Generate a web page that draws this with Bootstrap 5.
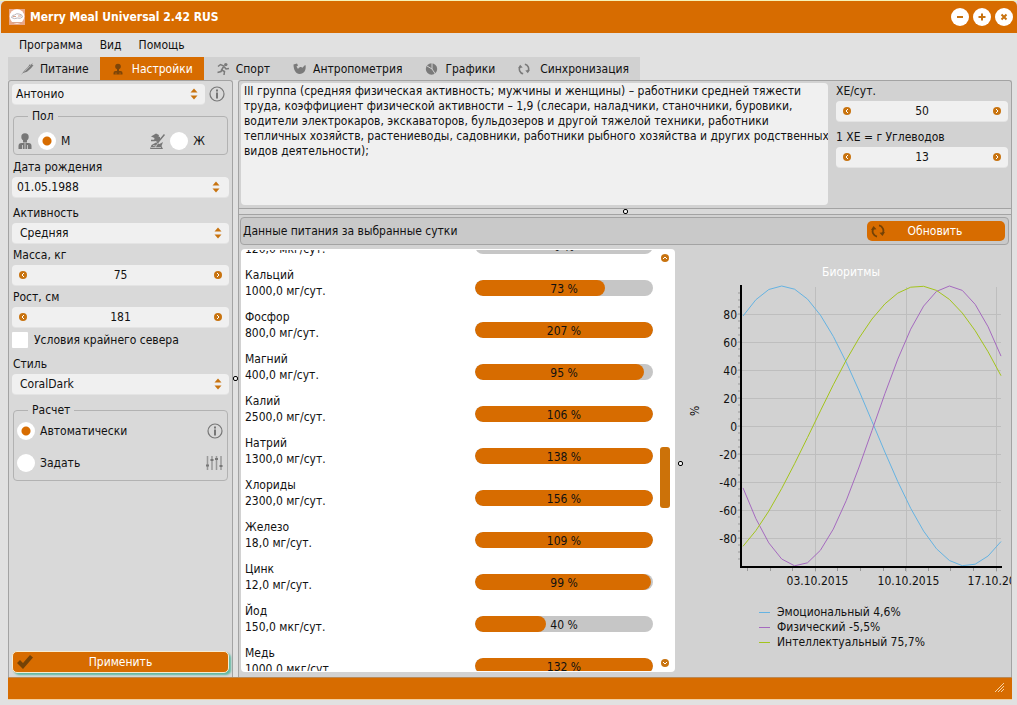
<!DOCTYPE html>
<html lang="ru">
<head>
<meta charset="utf-8">
<meta name="viewport" content="width=device-width, initial-scale=1">
<title>Merry Meal Universal 2.42 RUS</title>
<link href="https://cdn.jsdelivr.net/npm/bootstrap@5.3.0/dist/css/bootstrap.min.css" rel="stylesheet">
<style>
:root { --orange:#d76c00; --knob:#c8730f; --line:#a3a3a3; --field:#f0f0f0; --panel:#d2d2d2; }
body { font:12px/16px "DejaVu Sans Condensed","DejaVu Sans",sans-serif; color:#111; background:#e1e1e1; }
button, input, select, textarea { font:inherit; color:inherit; }
svg { display:block; flex:none; }
.app { overflow:hidden; padding:1px 0 6px 1px; background:#e1e1e1; box-shadow:inset 0 1px #f8f3b5; }
.titlebar { flex:none; height:32px; background:var(--orange); color:#fff; border-radius:5px 5px 0 0; padding:0 4px 0 8px; font-weight:bold; }
.app-name { padding-left:5px; }
.win-btn { width:18px; height:18px; border:0; padding:0; border-radius:50%; background:#fff; color:var(--knob); }
.menu { flex:none; height:24px; padding:0 18px; gap:17px; }
.menu a { color:#111; text-decoration:none; }
.workspace { margin:0 5px 0 7px; }
.fit { min-height:0; min-width:0; }
.tabs { flex:none; background:#d1d1d1; align-self:flex-start; flex-wrap:nowrap; }
.tabs .nav-link { display:flex; align-items:center; gap:6px; height:23px; padding:1px 11px 0 12px; border-radius:0; color:#111; white-space:nowrap; }
.tabs .nav-link svg { color:#7a7a7a; }
.tabs .nav-link.active { background:var(--orange); color:#fff; }
.tabs .nav-link.active svg { color:#7d4508; }
.side { width:225px; flex:none; background:#d9d9d9; border:1px solid var(--line); border-bottom:0; border-radius:3px 3px 0 0; padding:3px 3px 4px; }
.side > .cap { padding-left:1px; margin-bottom:2px; }
.box { height:20px; min-height:0; border:0; border-radius:4px; background-color:var(--field); font-size:12px; line-height:16px; color:#111; padding:2px 5px; box-shadow:0 1px #e4e4e4; }
select.box, .datebox { background-repeat:no-repeat; background-size:8px 12px;
  background-image:url("data:image/svg+xml,%3Csvg xmlns='http://www.w3.org/2000/svg' viewBox='0 0 8 12'%3E%3Cpath fill='%23c8730f' d='M.5 4.500 4 .5l3.500 4zM.5 7.500h7L4 11.500z'/%3E%3C/svg%3E"); }
select.box { padding:2px 20px 2px 8px; background-position:right 7px center; }
select.person { padding-left:4px; }
.datebox { background-position:right 9px center; }
.spin { display:flex; align-items:center; height:20px; border-radius:4px; background:var(--field); box-shadow:0 1px #e4e4e4; padding:0 7px; }
.spin input { flex:1; min-width:0; border:0; background:none; text-align:center; padding:0; height:20px; }
.knob { border:0; padding:0; background:none; color:var(--knob); flex:none; }
.group { border:1px solid #b2b2b2; border-radius:4px; margin:0 1px; }
.group legend { font-size:12px; line-height:16px; margin:-9px 0 0 14px; padding:0 4px; background:#d9d9d9; display:table; }
.opt { display:flex; align-items:center; gap:1px; padding:0 4px 0 3px; }
.opt + .opt { margin-top:14px; }
.sex { margin:8px 0 4px; }
.sex .last { padding-right:18px; }
.dot { appearance:none; width:18px; height:18px; margin:0; flex:none; border-radius:50%; background:#fff; }
.dot:checked { background:radial-gradient(circle,var(--orange) 4px,#fff 5px); }
.north { margin:5px 0 8px; }
.tick { appearance:none; width:16px; height:16px; margin:0 6px 0 0; background:#fff; flex:none; border-radius:1px; }
.g-ico { color:#777; }
.act { display:flex; align-items:center; height:20px; padding:0 20px 0 4px; background:var(--orange); color:#fff; border:0; border-radius:5px; font-size:12px; line-height:16px; }
.act:hover { background:#e47a10; color:#fff; }
.act span { flex:1; }
.apply { border:1px solid #f7ecd0; height:22px; box-shadow:2px 2px 2px #5fb9a3; }
.split { display:flex; align-items:center; justify-content:center; flex:none; }
.split i { width:5px; height:5px; border:1px solid #000; border-radius:2px; background:#f4f4f4; }
.split-v { width:5px; }
.split-h { height:7px; background:#d9d9d9; border:solid var(--line); border-width:1px 0; }
.main { background:var(--panel); border:1px solid var(--line); border-bottom:0; border-radius:3px 3px 0 0; }
.top-pane { flex:none; height:127px; padding:2px 3px 3px 2px; gap:8px; }
.note { width:100%; border:0; border-radius:4px; background:var(--field); resize:none; padding:1px 0 1px 3px; line-height:15px; white-space:pre; overflow:hidden; display:block; }
.xe { width:172px; flex:none; }
.xe .cap { margin-bottom:2px; }
.caption-bar { height:28px; margin:2px 2px 4px 1px; background:#c9c9c9; border:1px solid var(--line); border-radius:4px; padding:0 3px 0 2px; }
.refresh { width:138px; }
.feed { width:434px; flex:none; background:#fff; margin:0 0 5px 2px; border-radius:4px; padding:1px 5px 1px 4px; }
.feed ul { overflow:hidden; min-height:0; margin:0; padding:0; list-style:none; }
.feed li { display:flex; align-items:center; margin-bottom:10px; }
.feed li div:first-child { width:230px; flex:none; }
.meter { width:178px; height:16px; border-radius:8px; background:#c6c6c6; position:relative; font-size:12px; margin-top:10px; }
.meter .progress-bar { background:var(--orange); border-radius:8px; }
.meter span { position:absolute; inset:0; text-align:center; line-height:18px; color:#111; }
.rail { width:10px; padding:4px 0; }
.rail .thumb { height:61px; width:10px; border-radius:3px; background:#cc7209; }
.rail .before { flex:183; } .rail .after { flex:150; }
.chart-handle { margin-left:3px; }
.chart-title { color:#fff; padding:15px 0 0 8px; text-align:center; }
.chart-pane { overflow:hidden; }
.chart-pane text { font-size:12px; fill:#111; }
.legend-list { margin:17px 0 0 76px; padding:0; list-style:none; line-height:15px; }
.legend-list li { display:flex; gap:7px; align-items:center; }
.legend-list b { width:11px; height:1px; }
.status { flex:none; height:22px; background:var(--orange); box-shadow:inset 0 1px #b98a58, 0 1px #f3cf9f; padding:5px 7px; color:#f6d3a5; }
</style>
</head>
<body>
<svg width="0" height="0" class="position-absolute" aria-hidden="true">
  <symbol id="left" viewBox="0 0 8 8"><circle cx="4" cy="4" r="4" fill="currentColor"/><path d="M5 2 3 4l2 2" fill="none" stroke="#fff"/></symbol>
  <symbol id="right" viewBox="0 0 8 8"><circle cx="4" cy="4" r="4" fill="currentColor"/><path d="M3 2l2 2-2 2" fill="none" stroke="#fff"/></symbol>
  <symbol id="up" viewBox="0 0 8 8"><circle cx="4" cy="4" r="4" fill="currentColor"/><path d="M2 5l2-2 2 2" fill="none" stroke="#fff"/></symbol>
  <symbol id="down" viewBox="0 0 8 8"><circle cx="4" cy="4" r="4" fill="currentColor"/><path d="M2 3l2 2 2-2" fill="none" stroke="#fff"/></symbol>
  <symbol id="info" viewBox="0 0 16 16"><circle cx="8" cy="8" r="7" fill="none" stroke="#777" stroke-width="1.2"/><path d="M7 3.600h2v2H7zM7 6.600h2v6H7z" fill="#777"/></symbol>
  <symbol id="sync" viewBox="0 0 14 14"><path d="M6 12.600A5.400 5.400 0 0 1 2.400 4.500M8 1.400A5.400 5.400 0 0 1 11.600 9.500" fill="none" stroke="currentColor" stroke-width="1.800"/><path d="M0 6 2.500 2l3 3.200zM14 8 11.500 12l-3-3.200z" fill="currentColor"/></symbol>
</svg>
<div class="app vh-100 d-flex flex-column">
  <header class="titlebar d-flex align-items-center">
    <svg width="16" height="16" viewBox="0 0 16 16"><path fill="#e9a787" d="M0 0h16v16H0z"/><circle cx="8" cy="7.500" r="7.300" fill="#fff"/><path d="M2.500 8.500q1-3 3-2.500 2-2 4.500-1 3 0 3.500 3-2 2-5 1-3 1.500-6-.5z" fill="none" stroke="#b9b4b8"/><path d="M4 7.500h3M9 7h3M3 13.500h10" stroke="#d9a48c"/></svg>
    <span class="app-name flex-grow-1">Merry Meal Universal 2.42 RUS</span>
    <div class="d-flex gap-1">
      <button class="win-btn" aria-label="Свернуть"><svg width="18" height="18"><path d="M6 9h6" stroke="currentColor" stroke-width="2"/></svg></button>
      <button class="win-btn" aria-label="Развернуть"><svg width="18" height="18"><path d="M5.500 9h7M9 5.500v7" stroke="currentColor" stroke-width="2"/></svg></button>
      <button class="win-btn" aria-label="Закрыть"><svg width="18" height="18"><path d="M6.500 6.500l5 5m0-5l-5 5" stroke="currentColor" stroke-width="2"/></svg></button>
    </div>
  </header>
  <nav class="menu d-flex align-items-center"><a href="#">Программа</a><a href="#">Вид</a><a href="#">Помощь</a></nav>

  <div class="workspace fit d-flex flex-column flex-grow-1">
    <nav class="nav tabs">
      <a class="nav-link" href="#"><svg width="14" height="14" viewBox="0 0 14 14"><path d="M1 13l3-4 4-4 2-3 .6 1.200L12.500 1l-.3 2 1.300.2-2.500 3-4 3.500L3 11z" fill="currentColor"/><path d="M10.500 3.500l-6 6" stroke="#c4c4c4" stroke-width=".7"/></svg>Питание</a>
      <a class="nav-link active" aria-current="page" href="#"><svg width="14" height="14" viewBox="0 0 14 14"><circle cx="6" cy="4.500" r="2.800" fill="currentColor"/><path d="M5 7h2v2H5zM1.500 12.500V11q0-2 2-2h5q2 0 2 2v1.500z" fill="currentColor"/><path d="M4 10.500v2M8 10.500v2" stroke="#d76c00" stroke-width=".7"/></svg>Настройки</a>
      <a class="nav-link" href="#"><svg width="14" height="14" viewBox="0 0 14 14"><circle cx="9.800" cy="2.600" r="1.700" fill="currentColor"/><path d="M2 4.500 4.500 2.500 8 4l-2.500 4 3 1.500L8 13M6.500 7 5 9.500 1.500 10.500M8 4.500l2 2.500 3-.5" fill="none" stroke="currentColor" stroke-width="1.500"/></svg>Спорт</a>
      <a class="nav-link" href="#"><svg width="14" height="14" viewBox="0 0 14 14"><path d="M.5 2.500 4 1.500 5 3.500 3.500 4.500 5 7C6.500 5 8 4.500 9.500 5.800 10.500 5 11 3.500 12.500 3c1 5-1.500 9-6 9C3 12 .5 8 .5 2.500z" fill="currentColor"/></svg>Антропометрия</a>
      <a class="nav-link" href="#"><svg width="14" height="14" viewBox="0 0 14 14"><circle cx="6.500" cy="7" r="5.700" fill="currentColor"/><path d="M7 0v7l4 6M7 7 2 4" fill="none" stroke="#d1d1d1"/></svg>Графики</a>
      <a class="nav-link" href="#"><svg width="12" height="12"><use href="#sync"/></svg><span class="ps-1">Синхронизация</span></a>
    </nav>

    <div class="fit d-flex flex-grow-1">
      <aside class="side d-flex flex-column">
        <div class="d-flex align-items-center gap-1 mb-1">
          <select class="form-select box person" aria-label="Пользователь"><option>Антонио</option></select>
          <svg class="me-1" width="16" height="16"><use href="#info"/></svg>
        </div>
        <fieldset class="group">
          <legend class="float-none w-auto">Пол</legend>
          <div class="opt sex">
            <svg class="g-ico me-1" width="16" height="16" viewBox="0 0 16 16"><circle cx="8" cy="4" r="3.700" fill="currentColor"/><path d="M6 7h4v2.500H6zM1.500 16v-3Q1.500 10 4.500 10h7q3 0 3 3v3z" fill="currentColor"/><path d="M8 10v6M5.500 12v4M10.500 12v4" stroke="#d9d9d9" stroke-width=".8"/></svg>
            <input class="dot" type="radio" name="sex" id="m" checked><label class="ps-1 flex-grow-1" for="m">М</label>
            <svg class="g-ico me-1" width="16" height="16" viewBox="0 0 16 16"><path d="M2 3.500 7 .5l3 1.500-.5 1.500 1.500.5v3L8.500 9 5 7.500 5.500 5z" fill="currentColor"/><path d="M1 16l1.500-4L7 9.500l3.500 1.500L14 9l-1.500 4 1.500 3z" fill="currentColor"/><path d="M15.500 1.500 5 14M2 7.500h4" stroke="#777" stroke-width="1.500"/><path d="M4 12.500l3 .5M9 10l-3 5M2 14.500h10" stroke="#d9d9d9" stroke-width=".7"/></svg>
            <input class="dot" type="radio" name="sex" id="f"><label class="ps-1 last" for="f">Ж</label>
          </div>
        </fieldset>
        <label class="cap mt-1" for="birth">Дата рождения</label>
        <input class="form-control box datebox mb-2" id="birth" value="01.05.1988">
        <label class="cap" for="activity">Активность</label>
        <select class="form-select box mb-1" id="activity"><option>Средняя</option></select>
        <label class="cap" for="mass">Масса, кг</label>
        <div class="spin mb-1"><button class="knob" aria-label="Меньше"><svg width="8" height="8"><use href="#left"/></svg></button><input id="mass" value="75"><button class="knob" aria-label="Больше"><svg width="8" height="8"><use href="#right"/></svg></button></div>
        <label class="cap" for="height">Рост, см</label>
        <div class="spin"><button class="knob" aria-label="Меньше"><svg width="8" height="8"><use href="#left"/></svg></button><input id="height" value="181"><button class="knob" aria-label="Больше"><svg width="8" height="8"><use href="#right"/></svg></button></div>
        <div class="north d-flex align-items-center"><input class="tick" type="checkbox" id="north"><label for="north">Условия крайнего севера</label></div>
        <label class="cap" for="style">Стиль</label>
        <select class="form-select box mb-2" id="style"><option>CoralDark</option></select>
        <fieldset class="group pb-2">
          <legend class="float-none w-auto">Расчет</legend>
          <div class="opt mt-1"><input class="dot" type="radio" name="calc" id="auto" checked><label class="ps-1 flex-grow-1" for="auto">Автоматически</label><svg width="16" height="16"><use href="#info"/></svg></div>
          <div class="opt"><input class="dot" type="radio" name="calc" id="manual"><label class="ps-1 flex-grow-1" for="manual">Задать</label><svg width="18" height="16" viewBox="0 0 18 16"><path d="M2.500 1v14M7 1v14M11.500 1v14M16 1v14" stroke="#999" stroke-width="1.500"/><path d="M1 10.500h3M5.500 5h3M10 4h3M14.500 11h3" stroke="#777" stroke-width="2"/></svg></div>
        </fieldset>
        <button class="btn act apply mt-auto"><svg width="16" height="16" viewBox="0 0 16 16"><path d="M0 9l3-3 3 3 7-8 3 2.500L6 15z" fill="#744206"/></svg><span>Применить</span></button>
      </aside>

      <div class="split split-v"><i></i></div>

      <main class="main fit d-flex flex-column flex-grow-1">
        <section class="top-pane d-flex">
          <textarea class="note" wrap="off" aria-label="Описание группы активности">III группа (средняя физическая активность; мужчины и женщины) – работники средней тяжести
труда, коэффициент физической активности – 1,9 (слесари, наладчики, станочники, буровики,
водители электрокаров, экскаваторов, бульдозеров и другой тяжелой техники, работники
тепличных хозяйств, растениеводы, садовники, работники рыбного хозяйства и других родственных
видов деятельности);</textarea>
          <div class="xe d-flex flex-column">
            <label class="cap" for="xe">ХЕ/сут.</label>
            <div class="spin mb-2"><button class="knob" aria-label="Меньше"><svg width="8" height="8"><use href="#left"/></svg></button><input id="xe" value="50"><button class="knob" aria-label="Больше"><svg width="8" height="8"><use href="#right"/></svg></button></div>
            <label class="cap" for="carb">1 ХЕ = г Углеводов</label>
            <div class="spin"><button class="knob" aria-label="Меньше"><svg width="8" height="8"><use href="#left"/></svg></button><input id="carb" value="13"><button class="knob" aria-label="Больше"><svg width="8" height="8"><use href="#right"/></svg></button></div>
          </div>
        </section>
        <div class="split split-h"><i></i></div>
        <div class="caption-bar d-flex align-items-center justify-content-between flex-shrink-0">
          <span>Данные питания за выбранные сутки</span>
          <button class="btn act refresh"><svg width="14" height="14" style="color:#744206"><use href="#sync"/></svg><span>Обновить</span></button>
        </div>
        <div class="fit d-flex flex-grow-1">
          <div class="feed d-flex">
            <ul class="flex-grow-1" id="nutrients"></ul>
            <div class="rail d-flex flex-column align-items-center">
              <button class="knob" aria-label="Вверх"><svg width="8" height="8"><use href="#up"/></svg></button>
              <div class="before"></div><div class="thumb"></div><div class="after"></div>
              <button class="knob" aria-label="Вниз"><svg width="8" height="8"><use href="#down"/></svg></button>
            </div>
          </div>
          <div class="split split-v chart-handle"><i></i></div>
          <div class="chart-pane flex-grow-1">
            <div class="chart-title">Биоритмы</div>
            <svg id="chart" width="100%" height="308" role="img" aria-label="Биоритмы"></svg>
            <ul class="legend-list">
              <li><b style="background:#65b3e2"></b>Эмоциональный 4,6%</li>
              <li><b style="background:#a56abf"></b>Физический -5,5%</li>
              <li><b style="background:#a3c41c"></b>Интеллектуальный 75,7%</li>
            </ul>
          </div>
        </div>
      </main>
    </div>
  </div>
  <footer class="status workspace d-flex justify-content-end"><svg width="11" height="11"><path d="M1 10 10 1M4 10l6-6M7 10l3-3" stroke="currentColor"/></svg></footer>
</div>
<script src="https://cdn.jsdelivr.net/npm/bootstrap@5.3.0/dist/js/bootstrap.bundle.min.js"></script>
<script>
const rows = [['','120,0 мкг/сут.',0],['Кальций','1000,0 мг/сут.',73],['Фосфор','800,0 мг/сут.',207],['Магний','400,0 мг/сут.',95],['Калий','2500,0 мг/сут.',106],['Натрий','1300,0 мг/сут.',138],['Хлориды','2300,0 мг/сут.',156],['Железо','18,0 мг/сут.',109],['Цинк','12,0 мг/сут.',99],['Йод','150,0 мкг/сут.',40],['Медь','1000,0 мкг/сут.',132]];
const list = document.getElementById('nutrients');
list.innerHTML = rows.map(([n, q, v]) => `<li><div>${n}<br>${q}</div><div class="progress meter" role="progressbar" aria-label="${n || q}" aria-valuenow="${v}"><div class="progress-bar" style="width:${Math.min(v, 100)}%"></div><span>${v} %</span></div></li>`).join('');
// Start with the first record scrolled mostly out of view
list.scrollTop = 25;

// Biorhythm plot: one sample per day, 1.4 px per percent
const X0 = 59, Y0 = 146, day = 12.9, px = v => Y0 - v * 1.4;
let s = '';
for (let v = -80; v <= 80; v += 20) {
  s += `<path d="M54 ${px(v)}.5H318" stroke="#bebebe"/><text x="54" y="${px(v) + 5}" text-anchor="end">${v}</text>`;
}
for (let v = -95; v <= 95; v += 5) s += `<path d="M55 ${px(v)}h3" stroke="#999"/>`;
[['03.10.2015', 132.5], ['10.10.2015', 223.5], ['17.10.2015', 313.5]].forEach(([t, x]) => {
  s += `<path d="M${x} 7v285" stroke="#bebebe"/><text x="${x + 2}" y="305" text-anchor="middle">${t}</text>`;
});
for (let i = 0; i < 12; i++) s += `<path d="M${Math.round(64 + i * 22.6)}.5 288v3" stroke="#999"/>`;
[['#65b3e2', 39, 28.5], ['#a56abf', 207, 23.7], ['#a3c41c', 176.5, 33]].forEach(([c, peak, period]) => {
  const p = [];
  for (let i = 0; i <= 20; i++) p.push((X0 + 1 + i * day).toFixed(1) + ',' + px(100 * Math.cos(2 * Math.PI * (i * day - peak) / (period * day))).toFixed(1));
  s += `<polyline points="${p.join(' ')}" fill="none" stroke="${c}"/>`;
});
s += '<path d="M58 5v282h261" fill="none" stroke="#000" stroke-width="2"/><text transform="translate(16 136) rotate(-90)">%</text>';
document.getElementById('chart').innerHTML = s;
</script>
</body>
</html>
